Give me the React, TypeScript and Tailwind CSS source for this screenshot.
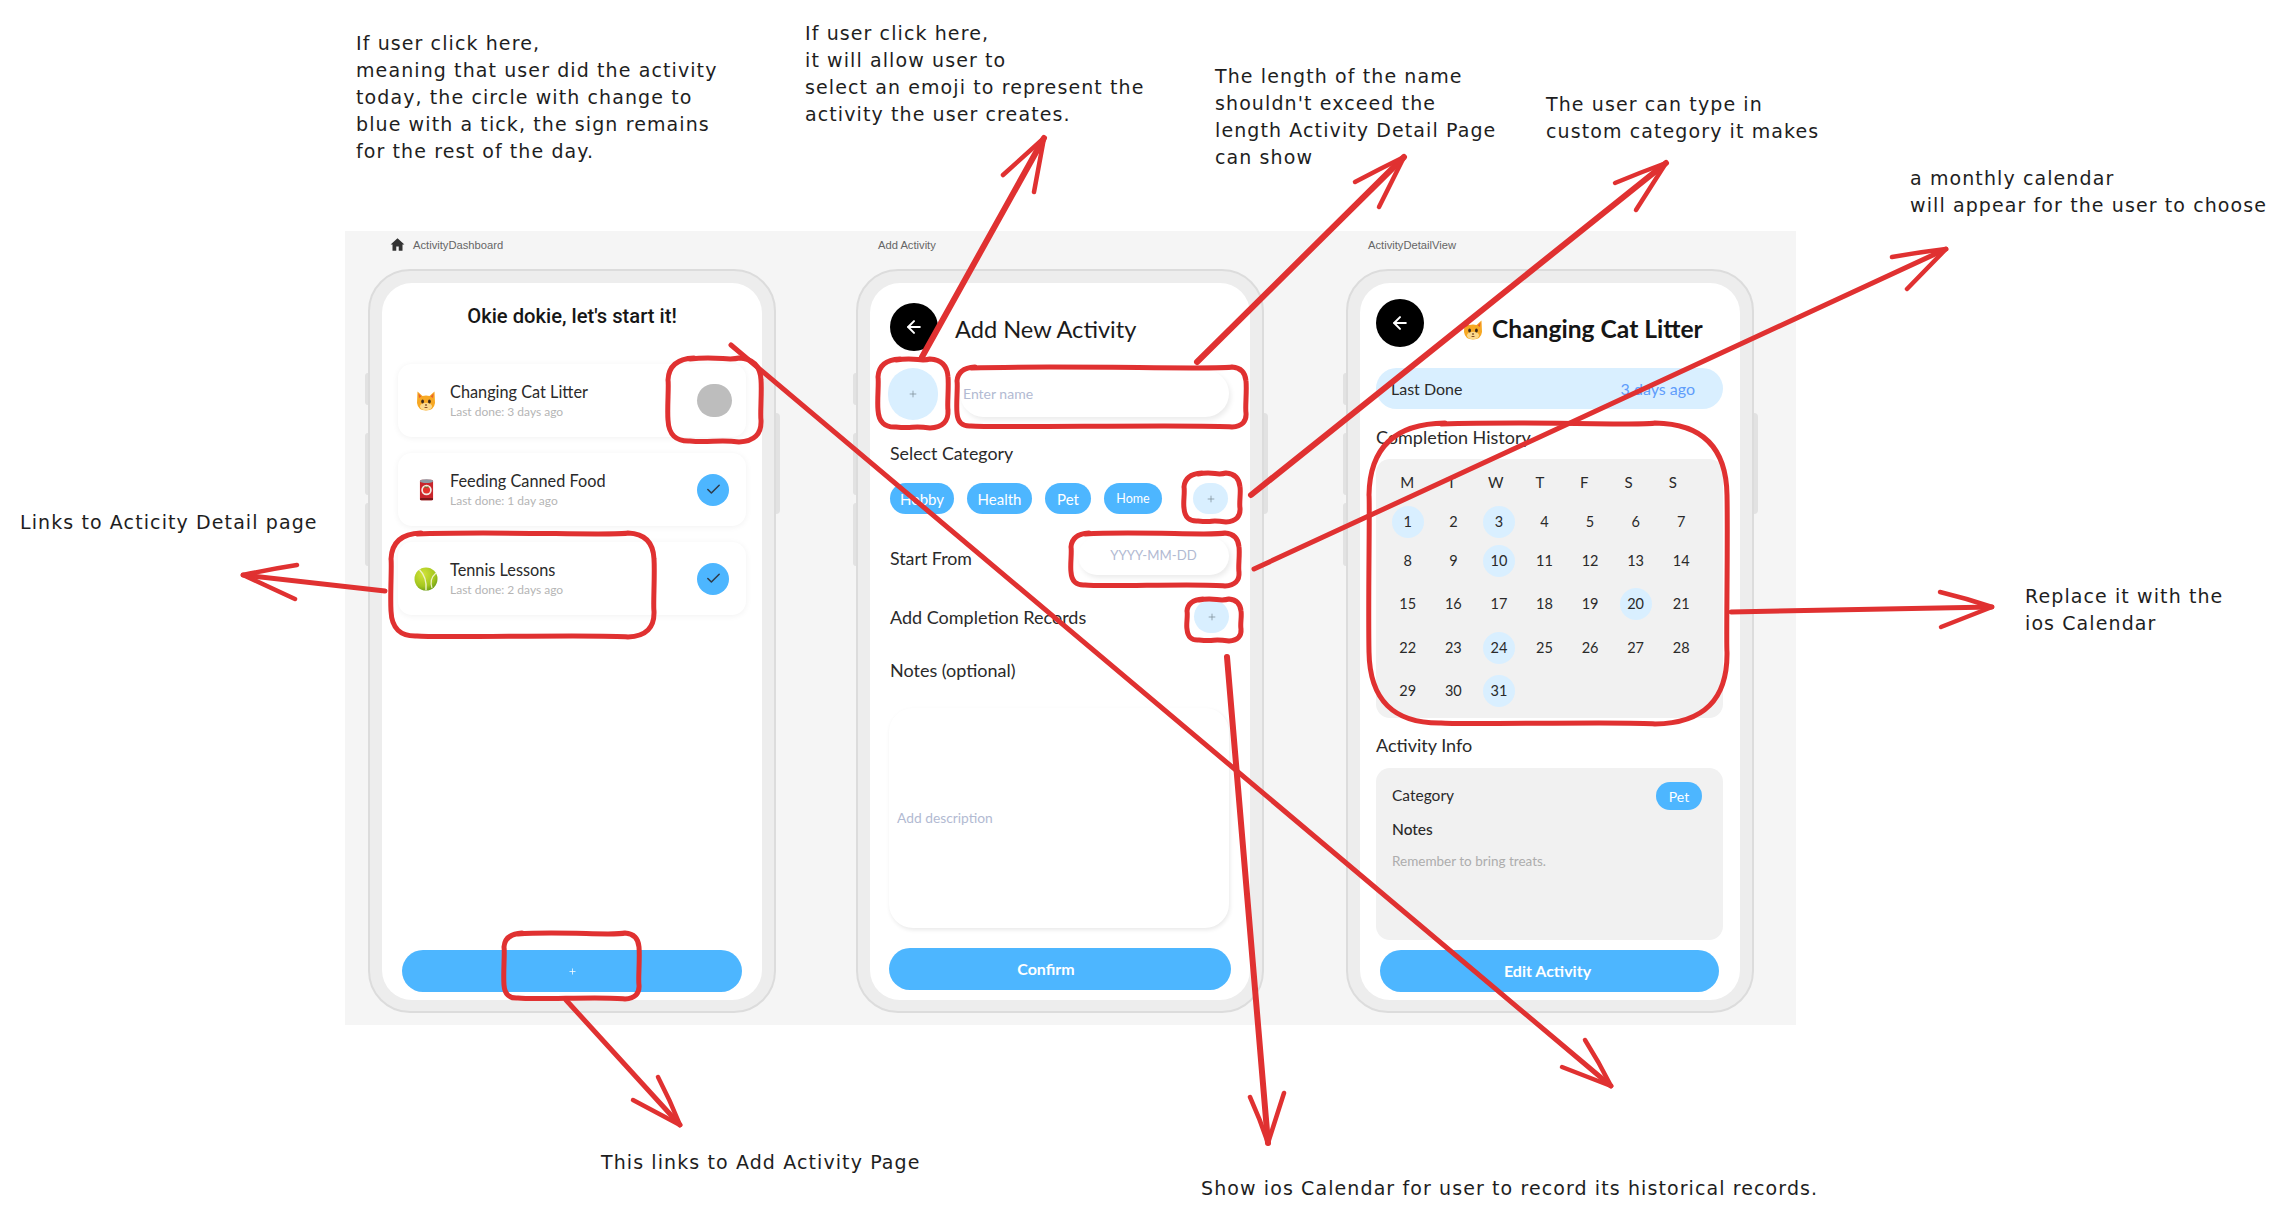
import React from "react";
import { ArrowLeft, Check, Plus } from "lucide-react";

const app = "font-['Lato','Noto_Sans',sans-serif]";

function Scribble({ x1, y1, x2, y2, r }: { x1: number; y1: number; x2: number; y2: number; r: number }) {
  const d = `M${x1 + r} ${y1 + 1} C${x1 + r + (x2 - x1) * 0.3} ${y1 - 2} ${x2 - r - 10} ${y1 + 3} ${x2 - r} ${y1}
    Q${x2 - 1} ${y1 + 1} ${x2} ${y1 + r} C${x2 + 1} ${y1 + (y2 - y1) * 0.4} ${x2 - 1} ${y2 - r - 5} ${x2} ${y2 - r}
    Q${x2 + 1} ${y2 - 1} ${x2 - r} ${y2} C${x2 - r - 20} ${y2 - 3} ${x1 + r + 20} ${y2 + 1} ${x1 + r} ${y2 - 1}
    Q${x1 + 1} ${y2} ${x1} ${y2 - r} C${x1 - 1} ${y1 + (y2 - y1) * 0.6} ${x1 + 1} ${y1 + r + 5} ${x1} ${y1 + r}
    Q${x1 + 1} ${y1 + 1} ${x1 + r + 4} ${y1}`;
  return <path d={d} fill="none" />;
}

function Arrow({ a, tip, w1, w2, wide }: { a: number[]; tip: number[]; w1: number[]; w2: number[]; wide?: boolean }) {
  return (
    <g fill="none" strokeWidth={wide ? 6 : 5}>
      <path d={`M${a[0]} ${a[1]} L${tip[0]} ${tip[1]}`} />
      <path d={`M${w1[0]} ${w1[1]} Q${(w1[0] + tip[0]) / 2 + 1} ${(w1[1] + tip[1]) / 2 - 1} ${tip[0]} ${tip[1]} Q${(w2[0] + tip[0]) / 2} ${(w2[1] + tip[1]) / 2} ${w2[0]} ${w2[1]}`} strokeWidth="4.5" />
    </g>
  );
}

function Note({ className, lines }: { className: string; lines: string[] }) {
  return (
    <div className={`absolute whitespace-nowrap font-['DejaVu_Sans',sans-serif] text-[19px] leading-[27px] tracking-[1.1px] text-[#1e1e1e] ${className}`}>
      {lines.map((l) => (
        <div key={l}>{l}</div>
      ))}
    </div>
  );
}

function CatEmoji({ className }: { className: string }) {
  return (
    <svg viewBox="0 0 20 22" className={className}>
      <path d="M1.5 1.5 L6.5 6 Q10 4.8 13.5 6 L18.5 1.5 L19 13 Q18 20.5 10 20.5 Q2 20.5 1 13 Z" fill="#f7a823" />
      <path d="M2.5 3.5 L5.5 6.5 L3 8 Z M17.5 3.5 L14.5 6.5 L17 8 Z" fill="#e8612c" />
      <ellipse cx="10" cy="16.5" rx="6" ry="3.8" fill="#fcd98c" />
      <ellipse cx="6.6" cy="11.5" rx="1.4" ry="1.9" fill="#3d2a1c" />
      <ellipse cx="13.4" cy="11.5" rx="1.4" ry="1.9" fill="#3d2a1c" />
      <ellipse cx="10" cy="15" rx="1.1" ry="0.8" fill="#6b3a1e" />
      <path d="M8 17 Q10 19 12 17" fill="#7a3b1a" />
    </svg>
  );
}

function CanEmoji({ className }: { className: string }) {
  return (
    <svg viewBox="0 0 16 24" className={className}>
      <rect x="1" y="1" width="14" height="22" rx="2" fill="#c8252b" />
      <ellipse cx="8" cy="2.6" rx="7" ry="2" fill="#8d99a3" />
      <rect x="1" y="20.5" width="14" height="2.5" rx="1.2" fill="#7c1518" />
      <circle cx="8" cy="12" r="5.6" fill="#f3ece4" />
      <circle cx="8" cy="12" r="3.8" fill="#e4342d" />
      <path d="M6 8.6 Q8 10 10 8.6" stroke="#3b8d2f" strokeWidth="1" fill="none" />
    </svg>
  );
}

function BallEmoji({ className }: { className: string }) {
  return (
    <svg viewBox="0 0 24 24" className={className}>
      <defs>
        <radialGradient id="ball" cx="0.38" cy="0.3" r="0.8">
          <stop offset="0" stopColor="#d2e339" />
          <stop offset="0.65" stopColor="#a3c61f" />
          <stop offset="1" stopColor="#5f9414" />
        </radialGradient>
      </defs>
      <circle cx="12" cy="12" r="11.5" fill="url(#ball)" />
      <path d="M5.5 2.8 Q13 10 12 23" stroke="#eef2c8" strokeWidth="1.4" fill="none" />
      <path d="M22 6 Q15 12 18 21" stroke="#eef2c8" strokeWidth="1.2" fill="none" />
    </svg>
  );
}

function Phone({ label, icon, children }: { label: string; icon?: React.ReactNode; children: React.ReactNode }) {
  return (
    <div className="flex w-[408px] flex-col">
      <div className="flex h-[38px] items-start gap-[8px] pl-[22px] pt-[6px] font-['Liberation_Sans',sans-serif] text-[11.2px] leading-[16px] text-[#666]">
        {icon}
        <span>{label}</span>
      </div>
      <div className="relative h-[744px] w-[408px] rounded-[42px] border-2 border-[#dcdcdc] bg-[#ededed] pb-[11px] pl-[12px] pr-[12px] pt-[12px]">
        <div className="absolute left-[-5px] top-[102px] h-[32px] w-[3px] rounded-l bg-[#e2e2e2]" />
        <div className="absolute left-[-5px] top-[162px] h-[62px] w-[3px] rounded-l bg-[#e2e2e2]" />
        <div className="absolute left-[-5px] top-[232px] h-[63px] w-[3px] rounded-l bg-[#e2e2e2]" />
        <div className="absolute right-[-6px] top-[142px] h-[101px] w-[4px] rounded-r bg-[#e2e2e2]" />
        <div className={`flex h-full w-full flex-col rounded-[30px] bg-white ${app}`}>{children}</div>
      </div>
    </div>
  );
}

function Card({ emoji, name, sub, done }: { emoji: React.ReactNode; name: string; sub: string; done: boolean }) {
  return (
    <div className="flex h-[73px] items-center rounded-[14px] bg-white pl-[18px] pr-[14px] shadow-[0_1px_6px_rgba(0,0,0,0.06)]">
      <div className="flex w-[20px] shrink-0 justify-center">{emoji}</div>
      <div className="ml-[14px] mt-[3px] flex flex-col">
        <span className="text-[16.3px] leading-[20px] text-[#2a2a2a]">{name}</span>
        <span className="text-[12px] leading-[20px] text-[#b5b5b5]">{sub}</span>
      </div>
      {done ? (
        <div className="ml-auto mr-[3px] flex h-[32px] w-[32px] items-center justify-center rounded-full bg-[#4db6ff]">
          <Check size={17} strokeWidth={2.2} className="text-[#2f3b4a]" />
        </div>
      ) : (
        <div className="ml-auto h-[33px] w-[35px] rounded-full bg-[#bdbdbd]" />
      )}
    </div>
  );
}

function Back() {
  return (
    <div className="flex h-[48px] w-[48px] shrink-0 items-center justify-center rounded-full bg-black">
      <ArrowLeft size={20} strokeWidth={2.4} className="text-white" />
    </div>
  );
}

function MiniPlus() {
  return (
    <div className="flex h-full w-[35px] items-center justify-center rounded-full bg-[#d9efff]">
      <Plus size={10} strokeWidth={1.8} className="text-[#7d8b97]" />
    </div>
  );
}

function Chip({ w, text, small }: { w: string; text: string; small?: boolean }) {
  return (
    <div className={`flex h-[31px] items-center justify-center rounded-full bg-[#4db6ff] pt-[1px] text-white ${w} ${small ? "text-[12.5px]" : "text-[15px]"}`}>
      {text}
    </div>
  );
}

const heads = ["M", "T", "W", "T", "F", "S", "S"];
const weeks: { cls: string; days: number[] }[] = [
  { cls: "mt-[13px]", days: [1, 2, 3, 4, 5, 6, 7] },
  { cls: "mt-[5px]", days: [8, 9, 10, 11, 12, 13, 14] },
  { cls: "mt-[9px]", days: [15, 16, 17, 18, 19, 20, 21] },
  { cls: "mt-[10px]", days: [22, 23, 24, 25, 26, 27, 28] },
  { cls: "mt-[9px]", days: [29, 30, 31] },
];
const marked = [1, 3, 10, 20, 24, 31];

export default function App() {
  return (
    <div className="relative h-[1222px] w-[2284px] overflow-hidden bg-white">
      <div className="ml-[345px] h-[231px]" />
      <div className="ml-[345px] flex h-[794px] w-[1451px] gap-[80px] bg-[#f5f5f5] pl-[23px]">
        {/* Dashboard */}
        <Phone
          label="ActivityDashboard"
          icon={
            <svg viewBox="0 0 24 24" className="h-[15px] w-[15px] fill-[#333]">
              <path d="M12 2 L1 12 H4 V22 H10 V15 H14 V22 H20 V12 H23 Z" />
            </svg>
          }
        >
          <div className="mt-[19px] text-center font-['Roboto',sans-serif] text-[20.2px] font-medium leading-[28px] text-[#161616]">
            Okie dokie, let's start it!
          </div>
          <div className="mx-[16px] mt-[34px] flex flex-col gap-[16px]">
            <Card emoji={<CatEmoji className="h-[22px] w-[20px]" />} name="Changing Cat Litter" sub="Last done: 3 days ago" done={false} />
            <Card emoji={<CanEmoji className="h-[24px] w-[15px]" />} name="Feeding Canned Food" sub="Last done: 1 day ago" done />
            <Card emoji={<BallEmoji className="h-[24px] w-[24px] max-w-none shrink-0" />} name="Tennis Lessons" sub="Last done: 2 days ago" done />
          </div>
          <div className="mx-[20px] mb-[8px] mt-auto flex h-[42px] items-center justify-center rounded-full bg-[#4db6ff]">
            <Plus size={9} strokeWidth={2} className="text-white" />
          </div>
        </Phone>

        {/* Add activity */}
        <Phone label="Add Activity">
          <div className="flex items-center gap-[17px] pl-[20px] pt-[20px]">
            <Back />
            <span className="mt-[4px] text-[23.6px] leading-[32px] text-[#1b1b1b]">Add New Activity</span>
          </div>
          <div className="ml-[18px] mt-[17px] flex items-start gap-[22px]">
            <div className="flex h-[52px] w-[50px] items-center justify-center rounded-full bg-[#d9efff]">
              <Plus size={10} strokeWidth={1.8} className="text-[#7d8b97]" />
            </div>
            <div className="mt-[2px] flex h-[47px] w-[269px] items-center rounded-full bg-white pl-[3px] text-[14px] text-[#b2bad2] shadow-[2px_3px_5px_rgba(0,0,0,0.08)]">
              Enter name
            </div>
          </div>
          <div className="ml-[20px] mt-[21px] text-[17.8px] leading-[24px] text-[#2a2a2a]">Select Category</div>
          <div className="ml-[20px] mt-[18px] flex h-[31px] gap-[13px]">
            <Chip w="w-[64px]" text="Hobby" />
            <Chip w="w-[65px]" text="Health" />
            <Chip w="w-[46px]" text="Pet" />
            <Chip w="w-[58px]" text="Home" small />
            <div className="ml-[18px]">
              <MiniPlus />
            </div>
          </div>
          <div className="ml-[20px] mr-[21px] mt-[23px] flex h-[38px] items-center justify-between">
            <span className="mt-[4px] text-[17.8px] leading-[24px] text-[#2a2a2a]">Start From</span>
            <div className="flex h-[38px] w-[151px] items-center justify-center rounded-full bg-white text-[13.2px] text-[#b2bad2] shadow-[2px_3px_5px_rgba(0,0,0,0.08)]">
              YYYY-MM-DD
            </div>
          </div>
          <div className="ml-[20px] mr-[21px] mt-[25px] flex h-[33px] items-center justify-between">
            <span className="text-[18px] leading-[24px] text-[#2a2a2a]">Add Completion Records</span>
            <MiniPlus />
          </div>
          <div className="ml-[20px] mt-[25px] text-[18px] leading-[24px] text-[#2a2a2a]">Notes (optional)</div>
          <div className="ml-[19px] mt-[26px] flex h-[220px] w-[340px] items-center rounded-[24px] bg-white pl-[8px] text-[13.8px] text-[#b2bad2] shadow-[1px_2px_4px_rgba(0,0,0,0.09)]">
            Add description
          </div>
          <div className="mx-[19px] mt-[20px] flex h-[42px] items-center justify-center rounded-full bg-[#4db6ff] pr-[28px] text-[16px] font-bold text-white">
            Confirm
          </div>
        </Phone>

        {/* Detail */}
        <div className="ml-[2px]">
          <Phone label="ActivityDetailView">
            <div className="flex items-start pl-[16px] pt-[16px]">
              <Back />
              <CatEmoji className="ml-[39px] mt-[20px] h-[22px] w-[20px]" />
              <span className="ml-[9px] mt-[14px] text-[24.6px] font-bold leading-[32px] text-[#161616]">Changing Cat Litter</span>
            </div>
            <div className="ml-[16px] mt-[21px] flex h-[41px] w-[347px] items-center justify-between rounded-full bg-[#d9efff] pl-[15px] pr-[28px] pt-[1px] text-[16px]">
              <span className="text-[#2a2a2a]">Last Done</span>
              <span className="text-[#5f9dfb]">3 days ago</span>
            </div>
            <div className="ml-[16px] mt-[16px] text-[18px] leading-[24px] text-[#2a2a2a]">Completion History</div>
            <div className="ml-[16px] mt-[10px] h-[259px] w-[347px] rounded-[14px] bg-[#f1f1f1] pl-[9px] pt-[13px] text-[14.5px] text-[#2a2a2a]">
              <div className="grid h-[20px] w-[310px] grid-cols-7 text-center text-[15px] leading-[20px]">
                {heads.map((h, i) => (
                  <span key={i}>{h}</span>
                ))}
              </div>
              {weeks.map((w) => (
                <div key={w.days[0]} className={`grid h-[34px] w-[319px] grid-cols-7 ${w.cls}`}>
                  {w.days.map((d) => (
                    <div key={d} className="flex items-center justify-center">
                      <span className={`flex h-[32px] w-[32px] items-center justify-center rounded-full ${marked.includes(d) ? "bg-[#d9efff]" : ""}`}>{d}</span>
                    </div>
                  ))}
                </div>
              ))}
            </div>
            <div className="ml-[16px] mt-[15px] text-[18px] leading-[24px] text-[#2a2a2a]">Activity Info</div>
            <div className="ml-[16px] mt-[11px] h-[172px] w-[347px] rounded-[14px] bg-[#f1f1f1] pl-[16px] pr-[21px] pt-[14px]">
              <div className="flex items-center justify-between text-[15.5px] text-[#2a2a2a]">
                <span>Category</span>
                <span className="flex h-[28px] w-[46px] items-center justify-center rounded-full bg-[#4db6ff] text-[14px] text-white">Pet</span>
              </div>
              <div className="mt-[9px] text-[15.5px] font-medium leading-[20px] text-[#2a2a2a]">Notes</div>
              <div className="mt-[12px] text-[13.5px] leading-[20px] text-[#adadad]">Remember to bring treats.</div>
            </div>
            <div className="ml-[20px] mt-[10px] flex h-[42px] w-[339px] items-center justify-center rounded-full bg-[#4db6ff] pr-[4px] text-[16px] font-bold text-white">
              Edit Activity
            </div>
          </Phone>
        </div>
      </div>

      {/* Annotations over the page */}
      <Note className="left-[356px] top-[30px]" lines={["If user click here,", "meaning that user did the activity", "today, the circle with change to", "blue with a tick, the sign remains", "for the rest of the day."]} />
      <Note className="left-[805px] top-[20px]" lines={["If user click here,", "it will allow user to", "select an emoji to represent the", "activity the user creates."]} />
      <Note className="left-[1215px] top-[63px]" lines={["The length of the name", "shouldn't exceed the", "length Activity Detail Page", "can show"]} />
      <Note className="left-[1546px] top-[91px]" lines={["The user can type in", "custom category it makes"]} />
      <Note className="left-[1910px] top-[165px]" lines={["a monthly calendar", "will appear for the user to choose"]} />
      <Note className="left-[20px] top-[509px]" lines={["Links to Acticity Detail page"]} />
      <Note className="left-[2025px] top-[583px]" lines={["Replace it with the", "ios Calendar"]} />
      <Note className="left-[601px] top-[1149px]" lines={["This links to Add Activity Page"]} />
      <Note className="left-[1201px] top-[1175px]" lines={["Show ios Calendar for user to record its historical records."]} />

      <svg className="pointer-events-none absolute left-0 top-0 h-[1222px] w-[2284px]" viewBox="0 0 2284 1222" stroke="#e03131" strokeWidth="5" strokeLinecap="round" strokeLinejoin="round">
        <Scribble x1={668} y1={358} x2={761} y2={442} r={22} />
        <Scribble x1={391} y1={533} x2={654} y2={637} r={26} />
        <Scribble x1={504} y1={933} x2={639} y2={999} r={14} />
        <Scribble x1={878} y1={359} x2={948} y2={428} r={18} />
        <Scribble x1={957} y1={367} x2={1246} y2={427} r={14} />
        <Scribble x1={1184} y1={473} x2={1240} y2={522} r={14} />
        <Scribble x1={1071} y1={533} x2={1239} y2={586} r={14} />
        <Scribble x1={1187} y1={599} x2={1241} y2={641} r={12} />
        <Scribble x1={1369} y1={423} x2={1727} y2={724} r={72} />
        <Arrow a={[731, 345]} tip={[1611, 1086]} w1={[1585, 1040]} w2={[1562, 1067]} />
        <Arrow a={[566, 1000]} tip={[680, 1125]} w1={[658, 1077]} w2={[633, 1100]} />
        <Arrow a={[385, 591]} tip={[243, 575]} w1={[297, 565]} w2={[295, 599]} />
        <Arrow a={[922, 357]} tip={[1044, 138]} w1={[1003, 175]} w2={[1034, 192]} wide />
        <Arrow a={[1197, 362]} tip={[1404, 157]} w1={[1355, 182]} w2={[1379, 207]} wide />
        <Arrow a={[1251, 495]} tip={[1666, 163]} w1={[1615, 183]} w2={[1636, 210]} wide />
        <Arrow a={[1254, 569]} tip={[1946, 249]} w1={[1892, 257]} w2={[1907, 289]} />
        <Arrow a={[1227, 657]} tip={[1268, 1143]} w1={[1250, 1097]} w2={[1284, 1093]} wide />
        <Arrow a={[1731, 612]} tip={[1992, 607]} w1={[1940, 592]} w2={[1941, 627]} />
      </svg>
    </div>
  );
}
